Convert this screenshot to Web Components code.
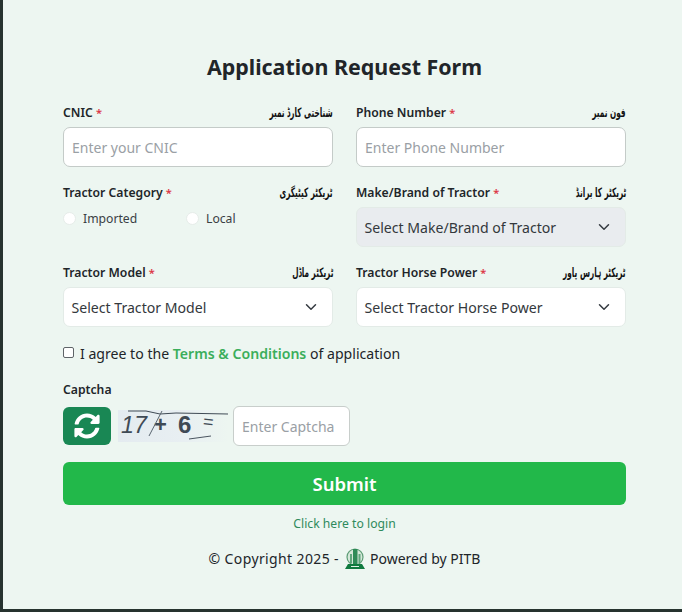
<!DOCTYPE html>
<html lang="en">
<head>
<meta charset="utf-8">
<title>Application Request Form</title>
<style>
html, body { margin: 0; height: 100%; background: #26332f; overflow: hidden; }
body { font-family: "Noto Sans", "Open Sans", sans-serif; color: #212529; }
</style>
</head>
<body>
<request-page>
  <h1 slot="title">Application Request Form</h1>

  <form-field slot="fields" label="CNIC" urdu="شناختی کارڈ نمبر" required>
    <text-input placeholder="Enter your CNIC"></text-input>
  </form-field>
  <form-field slot="fields" label="Phone Number" urdu="فون نمبر" required>
    <text-input placeholder="Enter Phone Number"></text-input>
  </form-field>
  <form-field slot="fields" label="Tractor Category" urdu="ٹریکٹر کیٹیگری" required>
    <radio-row>
      <radio-item>Imported</radio-item>
      <radio-item>Local</radio-item>
    </radio-row>
  </form-field>
  <form-field slot="fields" label="Make/Brand of Tractor" urdu="ٹریکٹر کا برانڈ" required>
    <select-box disabled>Select Make/Brand of Tractor</select-box>
  </form-field>
  <form-field slot="fields" label="Tractor Model" urdu="ٹریکٹر ماڈل" required>
    <select-box>Select Tractor Model</select-box>
  </form-field>
  <form-field slot="fields" label="Tractor Horse Power" urdu="ٹریکٹر ہارس پاور" required>
    <select-box>Select Tractor Horse Power</select-box>
  </form-field>

  <terms-check slot="terms"></terms-check>
  <captcha-row slot="captcha"></captcha-row>
  <submit-button slot="submit">Submit</submit-button>
  <page-footer slot="footer"></page-footer>
</request-page>

<script>
class RequestPage extends HTMLElement {
    constructor() {
        super()
        this.attachShadow({ mode: 'open' })
        this.shadowRoot.innerHTML = `
            <style>
                :host { display: block; height: 609px; margin-left: 3px; background: #edf6f1; box-sizing: border-box; padding: 52px 56px 0 60px; }
                ::slotted(h1) { margin: 0 0 20px; font-size: 21.4px; line-height: 30px; font-weight: 700; text-align: center; color: #212529; }
                .grid { display: grid; grid-template-columns: 270px 270px; column-gap: 23px; row-gap: 15px; }
            </style>
            <slot name="title"></slot>
            <div class="grid"><slot name="fields"></slot></div>
            <slot name="terms"></slot>
            <slot name="captcha"></slot>
            <slot name="submit"></slot>
            <slot name="footer"></slot>
        `
    }
}

class FormField extends HTMLElement {
    constructor() {
        super()
        this.attachShadow({ mode: 'open' })
        const star = this.hasAttribute('required') ? '<span class="star">*</span>' : ''
        this.shadowRoot.innerHTML = `
            <style>
                :host { display: block; height: 65px; }
                .top { display: flex; justify-content: space-between; align-items: center; height: 20px; margin-bottom: 5px; }
                .label { font-size: 12.2px; font-weight: 600; color: #212529; white-space: nowrap; }
                .star { color: #dc3545; font-size: 11px; }
                .urdu { font-family: "DejaVu Sans", sans-serif; font-size: 10px; font-weight: 700; color: #111; direction: rtl; transform: scale(.73, 1.3); transform-origin: right center; white-space: nowrap; }
            </style>
            <div class="top">
                <span class="label">${this.getAttribute('label')} ${star}</span>
                <span class="urdu" lang="ur">${this.getAttribute('urdu')}</span>
            </div>
            <slot></slot>
        `
    }
}

class TextInput extends HTMLElement {
    constructor() {
        super()
        this.attachShadow({ mode: 'open' })
        this.shadowRoot.innerHTML = `
            <style>
                :host { display: block; }
                input { display: block; width: 100%; height: 40px; box-sizing: border-box; padding: 0 8px; border: 1px solid #c4cbc8; border-radius: 7px; background: #fff; font-family: 'Noto Sans', sans-serif; font-size: 14px; outline: none; }
                input::placeholder { color: #9aa0a5; opacity: 1; }
            </style>
            <input type="text" placeholder="${this.getAttribute('placeholder')}">
        `
    }
}

class SelectBox extends HTMLElement {
    constructor() {
        super()
        this.attachShadow({ mode: 'open' })
        const bg = this.hasAttribute('disabled') ? '#e9ecef' : '#fff'
        this.shadowRoot.innerHTML = `
            <style>
                :host { display: flex; align-items: center; justify-content: space-between; height: 40px; box-sizing: border-box; padding: 0 15px 0 7.5px; background: ${bg}; border: 1px solid #e3ebe7; border-radius: 7px; font-size: 14.1px; color: #33383c; white-space: nowrap; }
                svg { width: 12px; height: 12px; flex: none; }
            </style>
            <slot></slot>
            <svg viewBox="0 0 16 16" fill="none" stroke="#343a40" stroke-width="2" stroke-linecap="round" stroke-linejoin="round"><path d="M2 5l6 6 6-6"/></svg>
        `
    }
}

class RadioRow extends HTMLElement {
    constructor() {
        super()
        this.attachShadow({ mode: 'open' })
        this.shadowRoot.innerHTML = `
            <style>
                :host { display: grid; grid-template-columns: 123px 1fr; margin-top: 2px; }
            </style>
            <slot></slot>
        `
    }
}

class RadioItem extends HTMLElement {
    constructor() {
        super()
        this.attachShadow({ mode: 'open' })
        this.shadowRoot.innerHTML = `
            <style>
                :host { display: flex; align-items: center; gap: 7px; height: 22px; font-size: 12.2px; color: #3a4044; }
                i { display: block; width: 13px; height: 13px; border-radius: 50%; background: #fff; border: 1px solid #e6ece9; box-sizing: border-box; }
            </style>
            <i></i><slot></slot>
        `
    }
}

class TermsCheck extends HTMLElement {
    constructor() {
        super()
        this.attachShadow({ mode: 'open' })
        this.shadowRoot.innerHTML = `
            <style>
                :host { display: flex; align-items: center; height: 20px; margin-top: 16px; font-size: 14.1px; color: #212529; }
                i { display: block; width: 9px; height: 9px; margin: -2px 6px 0 0; border: 1px solid #5f6468; border-radius: 2px; background: #fff; }
                b { color: #3bae5b; font-weight: 600; }
                span { white-space: pre; }
            </style>
            <i></i><span>I agree to the <b>Terms &amp; Conditions</b> of application</span>
        `
    }
}

class CaptchaRow extends HTMLElement {
    constructor() {
        super()
        this.attachShadow({ mode: 'open' })
        this.shadowRoot.innerHTML = `
            <style>
                :host { display: block; margin-top: 17px; }
                .label { font-size: 12.2px; font-weight: 600; height: 20px; line-height: 20px; margin-bottom: 6px; color: #212529; }
                .row { display: flex; align-items: center; height: 40px; }
                .refresh { display: flex; align-items: center; justify-content: center; width: 48px; height: 38px; background: #198754; border-radius: 6px; }
                .refresh svg { width: 26px; height: 26px; }
                .pic { width: 110px; height: 40px; margin: 0 5px 0 7px; flex: none; }
                input { width: 117px; height: 40px; box-sizing: border-box; padding: 0 8px; border: 1px solid #c8cecb; border-radius: 6px; background: #fff; font-family: 'Noto Sans', sans-serif; font-size: 14px; outline: none; }
                input::placeholder { color: #9aa0a5; opacity: 1; }
            </style>
            <div class="label">Captcha</div>
            <div class="row">
                <div class="refresh">
                    <svg viewBox="0 0 512 512" fill="#fff"><path d="M370.7 133.3C339.5 104 298.9 88 255.800 88c-77.500.1-144.300 53.200-162.800 126.900-1.300 5.400-6.100 9.100-11.600 9.100H24.100c-7.500 0-13.200-6.800-11.800-14.200C33.900 94.900 134.800 8 256 8c66.400 0 126.800 26.100 171.300 68.700L463 41C478.100 25.900 504 36.600 504 57.900V192c0 13.300-10.700 24-24 24H345.900c-21.400 0-32.100-25.900-17-41l41.800-41.700zM32 296h134.100c21.400 0 32.100 25.900 17 41l-41.800 41.800c31.300 29.300 71.800 45.300 114.900 45.200 77.400-.1 144.300-53.100 162.800-126.800 1.300-5.400 6.100-9.100 11.600-9.100h57.300c7.500 0 13.200 6.800 11.800 14.200C478.100 417.100 377.200 504 256 504c-66.400 0-126.800-26.100-171.300-68.700L49 471C33.900 486.100 8 475.400 8 454.100V320c0-13.300 10.700-24 24-24z"/></svg>
                </div>
                <svg class="pic" viewBox="0 0 110 40">
                    <defs><linearGradient id="fade" x1="0" x2="1" y1="0" y2="0"><stop offset="0" stop-color="#e4ebf0"/><stop offset=".6" stop-color="#e8eff2"/><stop offset="1" stop-color="#edf6f1"/></linearGradient></defs>
                    <rect x="0" y="4" width="110" height="32" fill="url(#fade)"/>
                    <g font-family="'Liberation Sans', sans-serif" fill="#3f4a55">
                        <text x="3" y="27" font-size="24" font-style="italic" textLength="26" lengthAdjust="spacingAndGlyphs">17</text>
                        <text x="36" y="26" font-size="22" font-weight="700">+</text>
                        <text x="60" y="27" font-size="24" font-weight="700">6</text>
                        <text x="85" y="22" font-size="18" transform="rotate(6 92 17)">=</text>
                    </g>
                    <path d="M10 5L28 5 42 8 58 7 110 8" stroke="#3f4a55" stroke-width="1" fill="none"/>
                    <path d="M31 30L44 5" stroke="#5a6570" stroke-width="1"/>
                    <path d="M71 33L93 30" stroke="#4a5560" stroke-width="1"/>
                </svg>
                <input type="text" placeholder="Enter Captcha">
            </div>
        `
    }
}

class SubmitButton extends HTMLElement {
    constructor() {
        super()
        this.attachShadow({ mode: 'open' })
        this.shadowRoot.innerHTML = `
            <style>
                :host { display: flex; align-items: center; justify-content: center; height: 43px; margin-top: 16px; background: #22b84a; border-radius: 6px; color: #fff; font-size: 18.5px; font-weight: 600; }
            </style>
            <slot></slot>
        `
    }
}

class PageFooter extends HTMLElement {
    constructor() {
        super()
        this.attachShadow({ mode: 'open' })
        this.shadowRoot.innerHTML = `
            <style>
                :host { display: block; text-align: center; }
                .login { display: block; height: 20px; line-height: 20px; margin-top: 9px; font-size: 12.2px; color: #2f8a5c; }
                .copy { display: flex; align-items: center; justify-content: center; height: 24px; margin-top: 12px; font-size: 14px; color: #212529; white-space: pre; }
                .left { letter-spacing: .38px; }
                svg { width: 24px; height: 24px; margin: 0 3px 0 4px; }
            </style>
            <span class="login">Click here to login</span>
            <div class="copy">
                <span class="left">© Copyright 2025 -</span>
                <svg viewBox="0 0 24 24">
                    <circle cx="12" cy="11" r="8" fill="#d5e8da" stroke="#5d9c76" stroke-width="1.200"/>
                    <path d="M10 3h4.500v15H10z" fill="#2e8b57"/>
                    <path d="M7 8h2v9H7zM15.500 8h2v9h-2z" fill="#5fa67d"/>
                    <path d="M5 18h14l3 5H2z" fill="#0f7a3f"/>
                    <path d="M8 20.500h8" stroke="#dff0e4" stroke-width="1"/>
                </svg>
                <span>Powered by PITB</span>
            </div>
        `
    }
}

customElements.define('request-page', RequestPage)
customElements.define('form-field', FormField)
customElements.define('text-input', TextInput)
customElements.define('select-box', SelectBox)
customElements.define('radio-row', RadioRow)
customElements.define('radio-item', RadioItem)
customElements.define('terms-check', TermsCheck)
customElements.define('captcha-row', CaptchaRow)
customElements.define('submit-button', SubmitButton)
customElements.define('page-footer', PageFooter)
</script>
</body>
</html>
